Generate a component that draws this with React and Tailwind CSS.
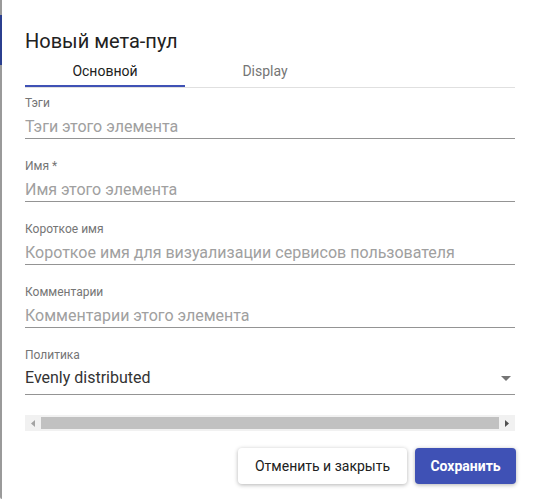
import React from "react";

const fields = [
    { label: "Тэги", placeholder: "Тэги этого элемента" },
    { label: "Имя *", placeholder: "Имя этого элемента" },
    { label: "Короткое имя", placeholder: "Короткое имя для визуализации сервисов пользователя" },
    { label: "Комментарии", placeholder: "Комментарии этого элемента" },
];

const TextField = ({ label, placeholder }) => (
    <div className="mb-[19px]">
        <div className="h-4 text-[12px] leading-4 text-[#757575]">{label}</div>
        <div className="pt-[6px] pb-px text-[16px] leading-5 text-[#a0a0a0] border-b border-[#949494]">
            {placeholder}
        </div>
    </div>
);

const App = () => {
    return (
        <div className="flex w-[540px] h-[499px] bg-white overflow-hidden" style={{ fontFamily: "Roboto, 'Liberation Sans', sans-serif" }}>
            <div className="flex flex-col w-[2px] bg-[#9a9a9a] rounded-bl">
                <div className="h-[15px]" />
                <div className="h-[50px] bg-[#2b3f8f]" />
            </div>
            <div className="flex-1 pl-[23px] pr-[25px]">
                <h2 className="pt-[27px] text-[20px] leading-7 text-[#212121]">Новый мета-пул</h2>
                <div className="flex mt-[1px] border-b border-[#e0e0e0]">
                    <div className="w-[160px] h-[31px] flex items-center justify-center text-[14px] text-[#212121] border-b-2 border-[#3f51b5] pt-[1px]">
                        Основной
                    </div>
                    <div className="w-[160px] h-[31px] flex items-center justify-center text-[14px] text-[#757575] pb-[1px]">
                        Display
                    </div>
                </div>
                <div className="pt-[7px]">
                    {fields.map((f) => (
                        <TextField key={f.label} label={f.label} placeholder={f.placeholder} />
                    ))}
                    <div>
                        <div className="h-4 text-[12px] leading-4 text-[#757575]">Политика</div>
                        <div className="flex items-center justify-between pt-[5px] pb-[6px] text-[16px] leading-5 text-[#333] border-b border-[#949494]">
                            <span>Evenly distributed</span>
                            <svg width="10" height="5" viewBox="0 0 10 5" className="mr-[4px]">
                                <path d="M0 0 L10 0 L5 5 Z" fill="#757575" />
                            </svg>
                        </div>
                    </div>
                </div>
                <div className="mt-[20px] h-[16px] flex items-center bg-[#f1f1f1]">
                    <div className="w-[16px] flex justify-center">
                        <svg width="4" height="7" viewBox="0 0 4 7"><path d="M4 0 L0 3.5 L4 7 Z" fill="#a3a3a3" /></svg>
                    </div>
                    <div className="flex-1 h-[12px] bg-[#c1c1c1]" />
                    <div className="w-[16px] flex justify-center">
                        <svg width="4" height="7" viewBox="0 0 4 7"><path d="M0 0 L4 3.5 L0 7 Z" fill="#505050" /></svg>
                    </div>
                </div>
                <div className="flex justify-end gap-2 mt-[17px] mr-[-1px]">
                    <button className="w-[169px] h-9 rounded bg-white text-[14px] font-normal text-[#212121] shadow-[0_1px_4px_rgba(0,0,0,0.3)]">
                        Отменить и закрыть
                    </button>
                    <button className="w-[101px] h-9 rounded bg-[#3f51b5] text-[14px] font-bold text-white shadow-[0_1px_4px_rgba(0,0,0,0.3)]">
                        Сохранить
                    </button>
                </div>
            </div>
        </div>
    );
};

export default App;
